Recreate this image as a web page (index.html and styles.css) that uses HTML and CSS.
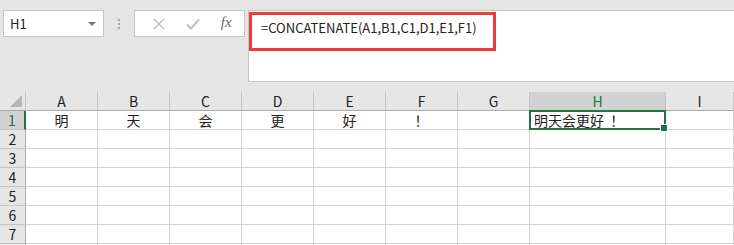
FILE: index.html
```html
<!DOCTYPE html>
<html lang="zh-CN">
<head>
  <meta charset="UTF-8" />
  <title>Sheet1</title>
  <link rel="stylesheet" href="styles.css">
</head>
<body>
  <div class="toolbar">
    <div class="name-box">
      <span>H1</span>
      <span class="arrow"></span>
    </div>
    <div class="grip"><i></i><i></i><i></i></div>
    <div class="func-box">
      <svg width="12" height="12" viewBox="0 0 12 12"><path d="M1 1L11 11M11 1L1 11" stroke="#c2c2c2" stroke-width="1.6" fill="none"/></svg>
      <svg width="14" height="12" viewBox="0 0 14 12"><path d="M1 6.5L5 10.5L13 1.5" stroke="#c2c2c2" stroke-width="2.2" fill="none"/></svg>
      <span class="fx">fx</span>
    </div>
    <div class="formula">
      <div class="formula-text">=CONCATENATE(A1,B1,C1,D1,E1,F1)</div>
    </div>
  </div>

  <div class="sheet" id="sheet">
    <!-- cells are built below -->
  </div>

  <script>
    const cols = ['A', 'B', 'C', 'D', 'E', 'F', 'G', 'H', 'I'];
    const row1 = ['明', '天', '会', '更', '好', '！', '', '明天会更好&nbsp; ！', ''];
    const sheet = document.getElementById('sheet');

    let html = '<div class="corner"><span class="tri"></span></div>';
    cols.forEach(c => {
      html += `<div class="col-head${c === 'H' ? ' active' : ''}">${c}</div>`;
    });

    // row 8 only peeks in at the bottom edge, so it gets no label
    for (let r = 1; r <= 8; r++) {
      html += `<div class="row-head${r === 1 ? ' active' : ''}">${r < 8 ? r : ''}</div>`;
      cols.forEach((c, i) => {
        if (r === 1 && c === 'H') {
          html += `<div class="cell left">${row1[i]}<div class="selection"><span class="handle"></span></div></div>`;
        } else {
          html += `<div class="cell">${r === 1 ? row1[i] : ''}</div>`;
        }
      });
    }
    sheet.innerHTML = html;
  </script>
</body>
</html>
```

FILE: styles.css
```css
body {
  margin: 0;
  background: #e6e6e6;
  font-family: "Noto Sans CJK SC", "Noto Sans", sans-serif;
  overflow: hidden;
}
.toolbar {
  display: flex;
  align-items: flex-start;
  padding: 10px 0 0 3px;
  height: 82px;
  box-sizing: border-box;
}
.name-box {
  width: 101px;
  height: 27px;
  box-sizing: border-box;
  background: #fff;
  border: 1px solid #c6c6c6;
  display: flex;
  align-items: center;
  justify-content: space-between;
  padding: 0 7px 0 6px;
  font-size: 13px;
  color: #222;
}
.arrow {
  width: 0;
  height: 0;
  border-left: 4px solid transparent;
  border-right: 4px solid transparent;
  border-top: 4px solid #777;
}
.grip {
  width: 30px;
  height: 27px;
  display: flex;
  flex-direction: column;
  align-items: center;
  justify-content: center;
  gap: 2px;
}
.grip i {
  width: 2px;
  height: 2px;
  background: #a8a8a8;
}
.func-box {
  width: 111px;
  height: 27px;
  box-sizing: border-box;
  background: #fff;
  border: 1px solid #c6c6c6;
  display: flex;
  align-items: center;
  justify-content: space-around;
  padding: 0 2px 0 8px;
}
.fx {
  font-family: "Liberation Serif", serif;
  font-style: italic;
  font-size: 15px;
  color: #666;
  margin-top: -2px;
}
.formula {
  flex: 1;
  height: 72px;
  margin-left: 3px;
  box-sizing: border-box;
  background: #fff;
  border-top: 1px solid #c6c6c6;
  border-bottom: 1px solid #c6c6c6;
  border-left: 1px solid #c6c6c6;
  padding-top: 1px;
}
.formula-text {
  width: 247px;
  height: 39px;
  box-sizing: border-box;
  border: 3px solid #f23a3a;
  padding: 3px 0 0 9px;
  font-size: 13px;
  color: #222;
}
.sheet {
  margin-top: 10px;
  display: grid;
  grid-template-columns: 26px repeat(7, 72px) 136px 1fr;
  grid-auto-rows: 19px;
  background: #fff;
  font-size: 14px;
  color: #222;
}
.corner, .col-head, .row-head, .cell {
  box-sizing: border-box;
  border-right: 1px solid #d4d4d4;
  border-bottom: 1px solid #d4d4d4;
  display: flex;
  align-items: center;
  justify-content: center;
  line-height: 1;
}
.corner, .col-head {
  background: #e6e6e6;
  border-right-color: #c4c4c4;
  border-bottom-color: #ababab;
}
.corner {
  position: relative;
}
.tri {
  position: absolute;
  right: 3px;
  bottom: 3px;
  width: 0;
  height: 0;
  border-left: 12px solid transparent;
  border-bottom: 12px solid #b6b6b6;
}
.row-head {
  background: #e6e6e6;
  border-right-color: #ababab;
  border-bottom-color: #c4c4c4;
}
.col-head.active, .row-head.active {
  background: #d2d2d2;
  color: #217346;
}
.row-head.active {
  border-right: 2px solid #217346;
}
.cell.left {
  justify-content: flex-start;
  padding-left: 4px;
  position: relative;
}
.selection {
  position: absolute;
  left: -1px;
  top: -1px;
  right: -1px;
  bottom: -1px;
  border: 2px solid #217346;
}
.handle {
  position: absolute;
  right: -4px;
  bottom: -4px;
  width: 6px;
  height: 6px;
  background: #217346;
  border: 1px solid #fff;
}
```
